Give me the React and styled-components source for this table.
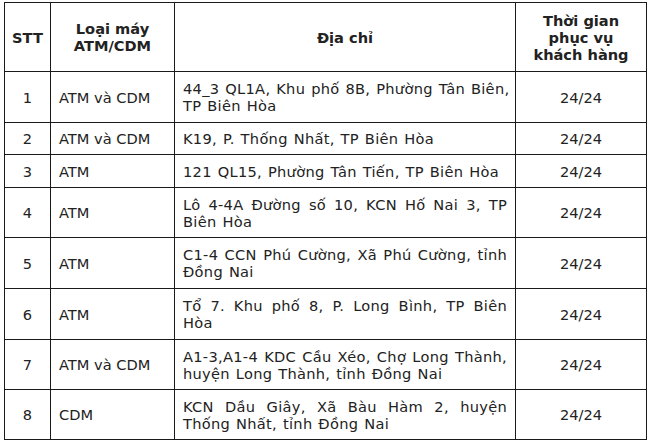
import React from "react"
import styled, { createGlobalStyle } from "styled-components"

const GlobalStyle = createGlobalStyle`
  body {
    margin: 0;
    background: #fff;
  }
`

const Page = styled.div`
  padding: 2px 4px;
`

const Table = styled.table`
  width: 642px;
  border-collapse: collapse;
  table-layout: fixed;
  font-family: "DejaVu Sans", Verdana, sans-serif;
  font-size: 14.6px;
  line-height: 17px;
  color: #222;
  border: 1px solid #1a1a1a;
`

const Row = styled.tr`
  height: ${props => props.h}px;
`

const Head = styled.th`
  border: 1px solid #1a1a1a;
  padding: 0 4px;
  font-weight: bold;
  text-align: center;
  vertical-align: middle;
`

const Cell = styled.td`
  border: 1px solid #1a1a1a;
  padding: 0 8px;
  vertical-align: middle;
  text-align: ${props => props.align || "left"};
  white-space: nowrap;
`

const Line = styled.div`
  letter-spacing: 0.3px;
  word-spacing: 1px;
  text-align: ${props => (props.full ? "justify" : "left")};
  text-align-last: ${props => (props.full ? "justify" : "left")};
`

const rows = [
  { stt: 1, type: "ATM và CDM", addr: ["44_3 QL1A, Khu phố 8B, Phường Tân Biên,", "TP Biên Hòa"], h: 51 },
  { stt: 2, type: "ATM và CDM", addr: ["K19, P. Thống Nhất, TP Biên Hòa"], h: 32 },
  { stt: 3, type: "ATM", addr: ["121 QL15, Phường Tân Tiến, TP Biên Hòa"], h: 33 },
  { stt: 4, type: "ATM", addr: ["Lô 4-4A Đường số 10, KCN Hố Nai 3, TP", "Biên Hòa"], h: 50 },
  { stt: 5, type: "ATM", addr: ["C1-4 CCN Phú Cường, Xã Phú Cường, tỉnh", "Đồng Nai"], h: 51 },
  { stt: 6, type: "ATM", addr: ["Tổ 7. Khu phố 8, P. Long Bình, TP Biên", "Hòa"], h: 51 },
  { stt: 7, type: "ATM và CDM", addr: ["A1-3,A1-4 KDC Cầu Xéo, Chợ Long Thành,", "huyện Long Thành, tỉnh Đồng Nai"], h: 50 },
  { stt: 8, type: "CDM", addr: ["KCN Dầu Giây, Xã Bàu Hàm 2, huyện", "Thống Nhất, tỉnh Đồng Nai"], h: 50 },
]

export default function App() {
  return (
    <Page>
      <GlobalStyle />
      <Table>
        <colgroup>
          <col style={{ width: 46 }} />
          <col style={{ width: 124 }} />
          <col style={{ width: 341 }} />
          <col style={{ width: 131 }} />
        </colgroup>
        <thead>
          <Row h={69}>
            <Head>STT</Head>
            <Head>Loại máy<br />ATM/CDM</Head>
            <Head>Địa chỉ</Head>
            <Head>Thời gian<br />phục vụ<br />khách hàng</Head>
          </Row>
        </thead>
        <tbody>
          {rows.map(r => (
            <Row key={r.stt} h={r.h}>
              <Cell align="center">{r.stt}</Cell>
              <Cell>{r.type}</Cell>
              <Cell>
                {r.addr.map((line, i) => (
                  <Line key={i} full={i < r.addr.length - 1}>{line}</Line>
                ))}
              </Cell>
              <Cell align="center">24/24</Cell>
            </Row>
          ))}
        </tbody>
      </Table>
    </Page>
  )
}
